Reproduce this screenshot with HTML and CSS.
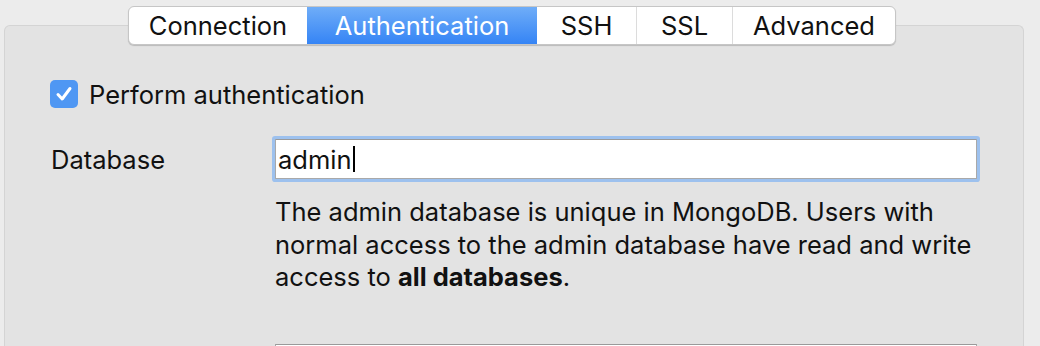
FILE: index.html
```html
<!DOCTYPE html>
<html lang="en">
<head>
  <meta charset="UTF-8" />
  <title>Connection settings</title>
  <link rel="stylesheet" href="styles.css">
</head>
<body>
  <div class="tabs">
    <div class="tab tab-connection">Connection</div>
    <div class="tab tab-auth active">Authentication</div>
    <div class="tab tab-ssh">SSH</div>
    <div class="tab tab-ssl">SSL</div>
    <div class="tab tab-advanced">Advanced</div>
  </div>

  <main class="panel">
    <label class="check-row">
      <span class="checkbox">
        <svg width="28" height="28" viewBox="0 0 28 28">
          <path d="M8 14.5 L12.2 19 L20 8.5" fill="none" stroke="#fff" stroke-width="3" stroke-linecap="round" stroke-linejoin="round"/>
        </svg>
      </span>
      Perform authentication
    </label>

    <div class="form-row">
      <div class="field-label">Database</div>
      <div class="field">
        <div class="input focused">admin<span class="caret"></span></div>
        <p class="help">The admin database is unique in MongoDB. Users with normal access to the admin database have read and write access to <b>all databases</b>.</p>
      </div>
    </div>

    <div class="form-row">
      <div class="field-label"></div>
      <div class="field">
        <div class="input"></div>
      </div>
    </div>
  </main>
</body>
</html>
```

FILE: styles.css
```css
* {
  margin: 0;
  padding: 0;
  box-sizing: border-box;
}

body {
  background: #ececec;
  font-family: 'Inter', 'Liberation Sans', sans-serif;
  font-size: 25.5px;
  color: #111;
  overflow: hidden;
  height: 346px;
}

.tabs {
  position: relative;
  z-index: 1;
  display: flex;
  height: 39px;
  margin: 6px 0 0 128px;
  width: 768px;
  background: #fff;
  border: 1px solid #c6c6c6;
  border-radius: 6px;
  box-shadow: 0 1px 1px rgba(0, 0, 0, 0.18);
  overflow: hidden;
}

.tab {
  display: flex;
  align-items: center;
  justify-content: center;
  border-left: 1px solid #dcdcdc;
  line-height: 1;
  padding-top: 1px;
}

.tab:first-child {
  border-left: none;
}

.tab.active {
  color: #fff;
  border-left: none;
  background: linear-gradient(to bottom, #6fadf8, #3584f5);
}

.tab.active + .tab {
  border-left: none;
}

.tab-connection { width: 178px; }
.tab-auth { width: 230px; }
.tab-ssh { width: 99px; }
.tab-ssl { width: 96px; }
.tab-advanced { flex: 1; }

.panel {
  margin: -20px 16px 0 4px;
  height: 321px;
  overflow: hidden;
  background: #e3e3e3;
  border: 1px solid #d4d4d4;
  border-bottom: none;
  border-radius: 6px 6px 0 0;
  padding: 54px 0 0 45px;
}

.check-row {
  display: flex;
  align-items: center;
  gap: 11px;
  height: 28px;
}

.checkbox {
  width: 28px;
  height: 28px;
  border-radius: 5px;
  background: #4f97f3;
  display: flex;
}

.form-row {
  display: flex;
  margin-top: 31px;
}

.form-row + .form-row {
  margin-top: 50px;
}

.field-label {
  width: 225px;
  padding-left: 1px;
  height: 40px;
  display: flex;
  align-items: center;
}

.field {
  width: 702px;
}

.input {
  height: 40px;
  background: #fff;
  border: 1px solid #a9a9a9;
  border-top-color: #9a9a9a;
  padding: 0 2px;
  display: flex;
  align-items: center;
}

.input.focused {
  box-shadow: 0 0 0 3px #9dc1ee;
  border-radius: 1px;
}

.caret {
  width: 2px;
  height: 26px;
  background: #000;
  margin-left: 1px;
}

.help {
  margin-top: 17px;
  line-height: 32.5px;
}

.help b {
  font-weight: 700;
}
```
